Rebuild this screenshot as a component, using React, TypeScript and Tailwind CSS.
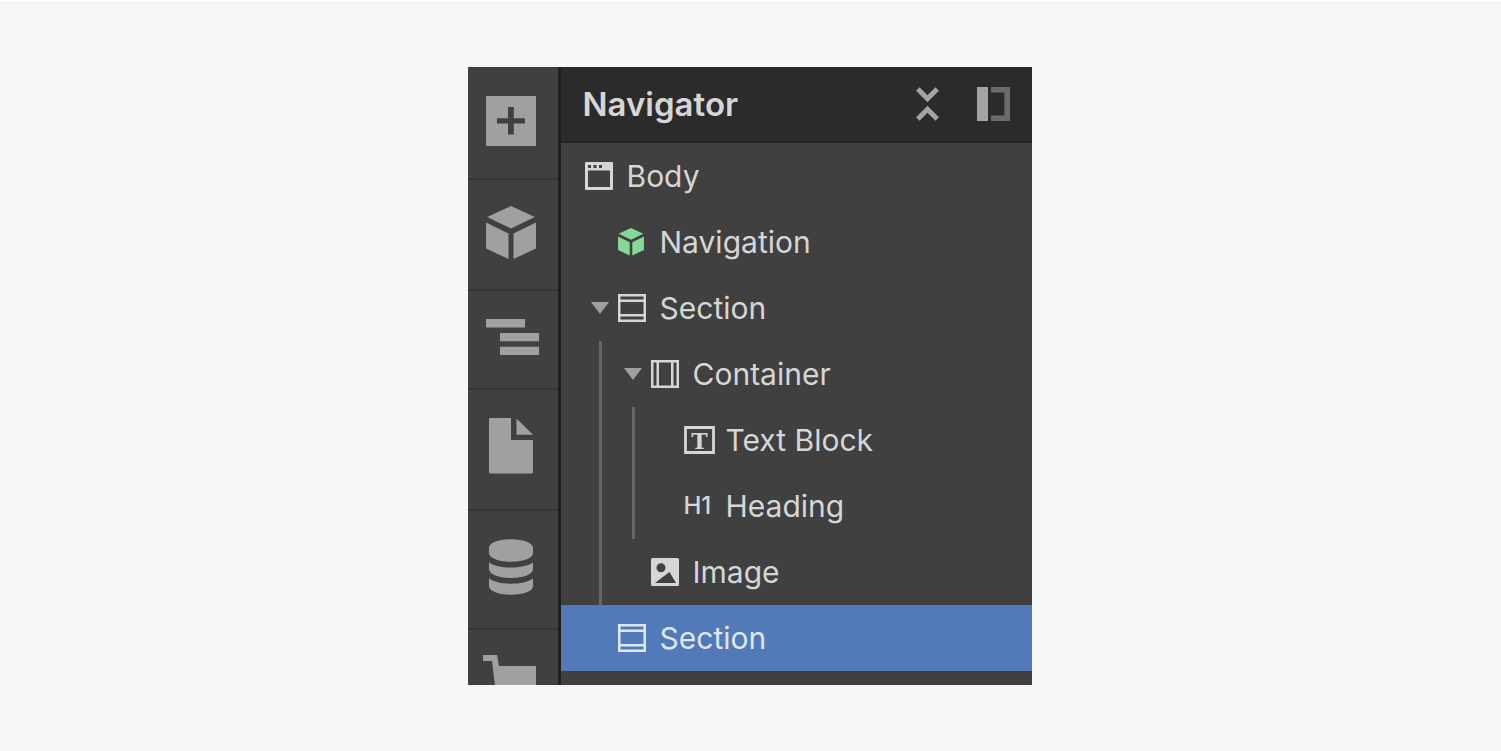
import type { ReactNode } from "react";

const CubeShape = () => (
  <>
    <path d="M25 0L48.8 11L25 22.5L1.2 11Z" />
    <path d="M0 16.5L22.5 27.5V53L0 42.5Z" />
    <path d="M50 16.5L27.5 27.5V53L50 42.5Z" />
  </>
);

const BodyIcon = () => (
  <svg width={28} height={28} viewBox="0 0 28 28" fill="currentColor">
    <path
      fillRule="evenodd"
      d="M1 0H27Q28 0 28 1V27Q28 28 27 28H1Q0 28 0 27V1Q0 0 1 0ZM3 8.5V25H25V8.5ZM3 3V6H6V3ZM8.5 3V6H11.5V3ZM14 3V6H17V3Z"
    />
  </svg>
);

const ComponentIcon = () => (
  <svg
    width={26}
    height={28}
    viewBox="0 0 50 54"
    fill="currentColor"
    className="text-[#86d897]"
  >
    <CubeShape />
  </svg>
);

const SectionIcon = () => (
  <svg width={28} height={28} viewBox="0 0 28 28" fill="none">
    <path
      d="M1.25 1.25H26.75V26.75H1.25ZM1 6.75H27M1 21.25H27"
      stroke="currentColor"
      strokeWidth="2.5"
    />
  </svg>
);

const ContainerIcon = () => (
  <svg width={28} height={28} viewBox="0 0 28 28" fill="none">
    <path
      d="M1.25 1.25H26.75V26.75H1.25ZM6.75 1V27M21.25 1V27"
      stroke="currentColor"
      strokeWidth="2.5"
    />
  </svg>
);

const TextIcon = () => (
  <svg
    width={31}
    height={28}
    viewBox="0 0 31 28"
    fill="none"
    className="shrink-0"
  >
    <path d="M1.5 1.5H29.5V26.5H1.5Z" stroke="currentColor" strokeWidth="2.8" />
    <text
      x="15.5"
      y="22.5"
      textAnchor="middle"
      fill="currentColor"
      fontFamily="'DejaVu Serif', serif"
      fontWeight="700"
      fontSize="22"
    >
      T
    </text>
  </svg>
);

const HeadingIcon = () => (
  <span className="text-2xl leading-7 font-medium">H1</span>
);

const ImageIcon = () => (
  <svg width={28} height={28} viewBox="0 0 28 28" fill="currentColor">
    <path
      fillRule="evenodd"
      d="M1.5 0H26.5Q28 0 28 1.5V26.5Q28 28 26.5 28H1.5Q0 28 0 26.5V1.5Q0 0 1.5 0ZM10 5.2A4.5 4.5 0 1 0 10 14.2A4.5 4.5 0 1 0 10 5.2ZM4 25H25L18.5 14L12.5 18.5Z"
    />
  </svg>
);

const tools = [
  {
    label: "Add elements",
    className: "pt-7 pb-8",
    icon: (
      <svg width={50} height={51} viewBox="0 0 50 51" fill="currentColor">
        <path
          fillRule="evenodd"
          d="M1 1H49Q50 1 50 2V50Q50 51 49 51H1Q0 51 0 50V2Q0 1 1 1ZM22 12V23.2H11V28.6H22V39.5H27.8V28.6H39V23.2H27.8V12Z"
        />
      </svg>
    )
  },
  {
    label: "Components",
    className: "pt-[26px] pb-[30px]",
    icon: (
      <svg width={50} height={53} viewBox="0 0 50 53" fill="currentColor">
        <CubeShape />
      </svg>
    )
  },
  {
    label: "Navigator",
    className: "pt-7 pb-8",
    icon: (
      <svg width={54} height={37} viewBox="0 0 54 37" fill="currentColor">
        <path d="M0 0H39V8.5H0ZM14 14H53V22.3H14ZM14 27.8H53V36H14Z" />
      </svg>
    )
  },
  {
    label: "Pages",
    className: "pt-7 pb-8",
    icon: (
      <svg width={50} height={59} viewBox="0 0 50 59" fill="currentColor">
        <path d="M4 0H25V22H47V54Q47 55.5 45.5 55.5H4.5Q3 55.5 3 54V1Q3 0 4 0Z" />
        <path d="M30.5 0.5L47 16.8H30.5Z" />
      </svg>
    )
  },
  {
    label: "CMS collections",
    className: "pt-7 pb-8",
    icon: (
      <svg width={50} height={57} viewBox="0 0 50 57" fill="currentColor">
        <path d="M3 9C3 4 12 0.3 25 0.3S47 4 47 9V14C47 19 38 22.7 25 22.7S3 19 3 14Z" />
        <path d="M3 23.5C8 27 16 28.5 25 28.5S42 27 47 23.5V30C47 35 38 39 25 39S3 35 3 30Z" />
        <path d="M3 39.5C8 43 16 44.7 25 44.7S42 43 47 39.5V47C47 52 38 55.7 25 55.7S3 52 3 47Z" />
      </svg>
    )
  },
  {
    label: "Ecommerce",
    className: "pt-6",
    icon: (
      <svg width={54} height={31} viewBox="-3 0 54 31" fill="currentColor">
        <path d="M-3 1H11L13 12H50V32H9L6 7H-3Z" />
      </svg>
    )
  }
];

type RowProps = {
  label: string;
  icon: ReactNode;
  className: string;
  open?: boolean;
  selected?: boolean;
};

const Row = ({ label, icon, className, open, selected }: RowProps) => (
  <button
    aria-expanded={open}
    className={`flex h-[66px] w-full cursor-pointer items-center text-left ${className} ${
      selected ? "bg-[#5279b8] text-[#dde7f7]" : ""
    }`}
  >
    {open && (
      <svg
        width={18}
        height={12}
        viewBox="0 0 18 12"
        className="mr-[9px] text-[#a0a0a0]"
      >
        <path d="M0 0H18L9 12Z" fill="currentColor" />
      </svg>
    )}
    <span className="flex w-7 shrink-0 items-center">{icon}</span>
    <span className="ml-3.5 text-[30px] leading-9 whitespace-nowrap">
      {label}
    </span>
  </button>
);

const App = () => {
  return (
    <div className="flex min-h-screen items-center justify-center border-t border-white bg-[#f5f7f9] pr-0.5 font-['Inter',sans-serif]">
      <div className="flex w-full max-w-[564px] bg-[#404040] text-[#d6d6d6]">
        <nav className="flex w-[93px] shrink-0 flex-col border-r-3 border-[#1f1f1f] text-[#a0a0a0]">
          {tools.map((tool) => (
            <button
              key={tool.label}
              aria-label={tool.label}
              className={`flex cursor-pointer border-b-2 border-[#363636] pl-[18px] last:border-b-0 last:pl-[15px] ${tool.className}`}
            >
              {tool.icon}
            </button>
          ))}
        </nav>

        <section className="min-w-0 flex-1 pb-3.5">
          <header className="flex h-[76px] items-center border-b-2 border-[#242424] bg-[#2b2b2b] px-[22px]">
            <h1 className="flex-1 text-[33px] leading-9 font-semibold">
              Navigator
            </h1>

            <button aria-label="Collapse all" className="cursor-pointer">
              <svg width={23} height={34} viewBox="0 0 23 34" fill="none">
                <path
                  d="M1.8 2L11.5 11.8L21.2 2M1.8 32L11.5 22.2L21.2 32"
                  stroke="#a3a3a3"
                  strokeWidth="5"
                />
              </svg>
            </button>
            <button aria-label="Dock panel" className="ml-[38px] cursor-pointer">
              <svg width={33} height={34} viewBox="0 0 33 34" fill="none">
                <path d="M0 0H11V34H0Z" fill="#a3a3a3" />
                <path
                  d="M14 2.8H30.2V31.2H14"
                  stroke="#6b6b6b"
                  strokeWidth="5.6"
                />
              </svg>
            </button>
          </header>

          <ul>
            <li>
              <Row label="Body" icon={<BodyIcon />} className="pl-6" />
              <ul>
                <li>
                  <Row
                    label="Navigation"
                    icon={<ComponentIcon />}
                    className="pl-[57px]"
                  />
                </li>
                <li>
                  <Row
                    label="Section"
                    icon={<SectionIcon />}
                    className="pl-[30px]"
                    open
                  />
                  <ul className="ml-[38px] border-l-3 border-[#666666]">
                    <li>
                      <Row
                        label="Container"
                        icon={<ContainerIcon />}
                        className="pl-[22px]"
                        open
                      />
                      <ul className="ml-[30px] border-l-3 border-[#666666]">
                        <li>
                          <Row
                            label="Text Block"
                            icon={<TextIcon />}
                            className="pl-[49px]"
                          />
                        </li>
                        <li>
                          <Row
                            label="Heading"
                            icon={<HeadingIcon />}
                            className="pl-[49px]"
                          />
                        </li>
                      </ul>
                    </li>
                    <li>
                      <Row
                        label="Image"
                        icon={<ImageIcon />}
                        className="pl-[49px]"
                      />
                    </li>
                  </ul>
                </li>
                <li>
                  <Row
                    label="Section"
                    icon={<SectionIcon />}
                    className="pl-[57px]"
                    selected
                  />
                </li>
              </ul>
            </li>
          </ul>
        </section>
      </div>
    </div>
  );
};

export default App;
